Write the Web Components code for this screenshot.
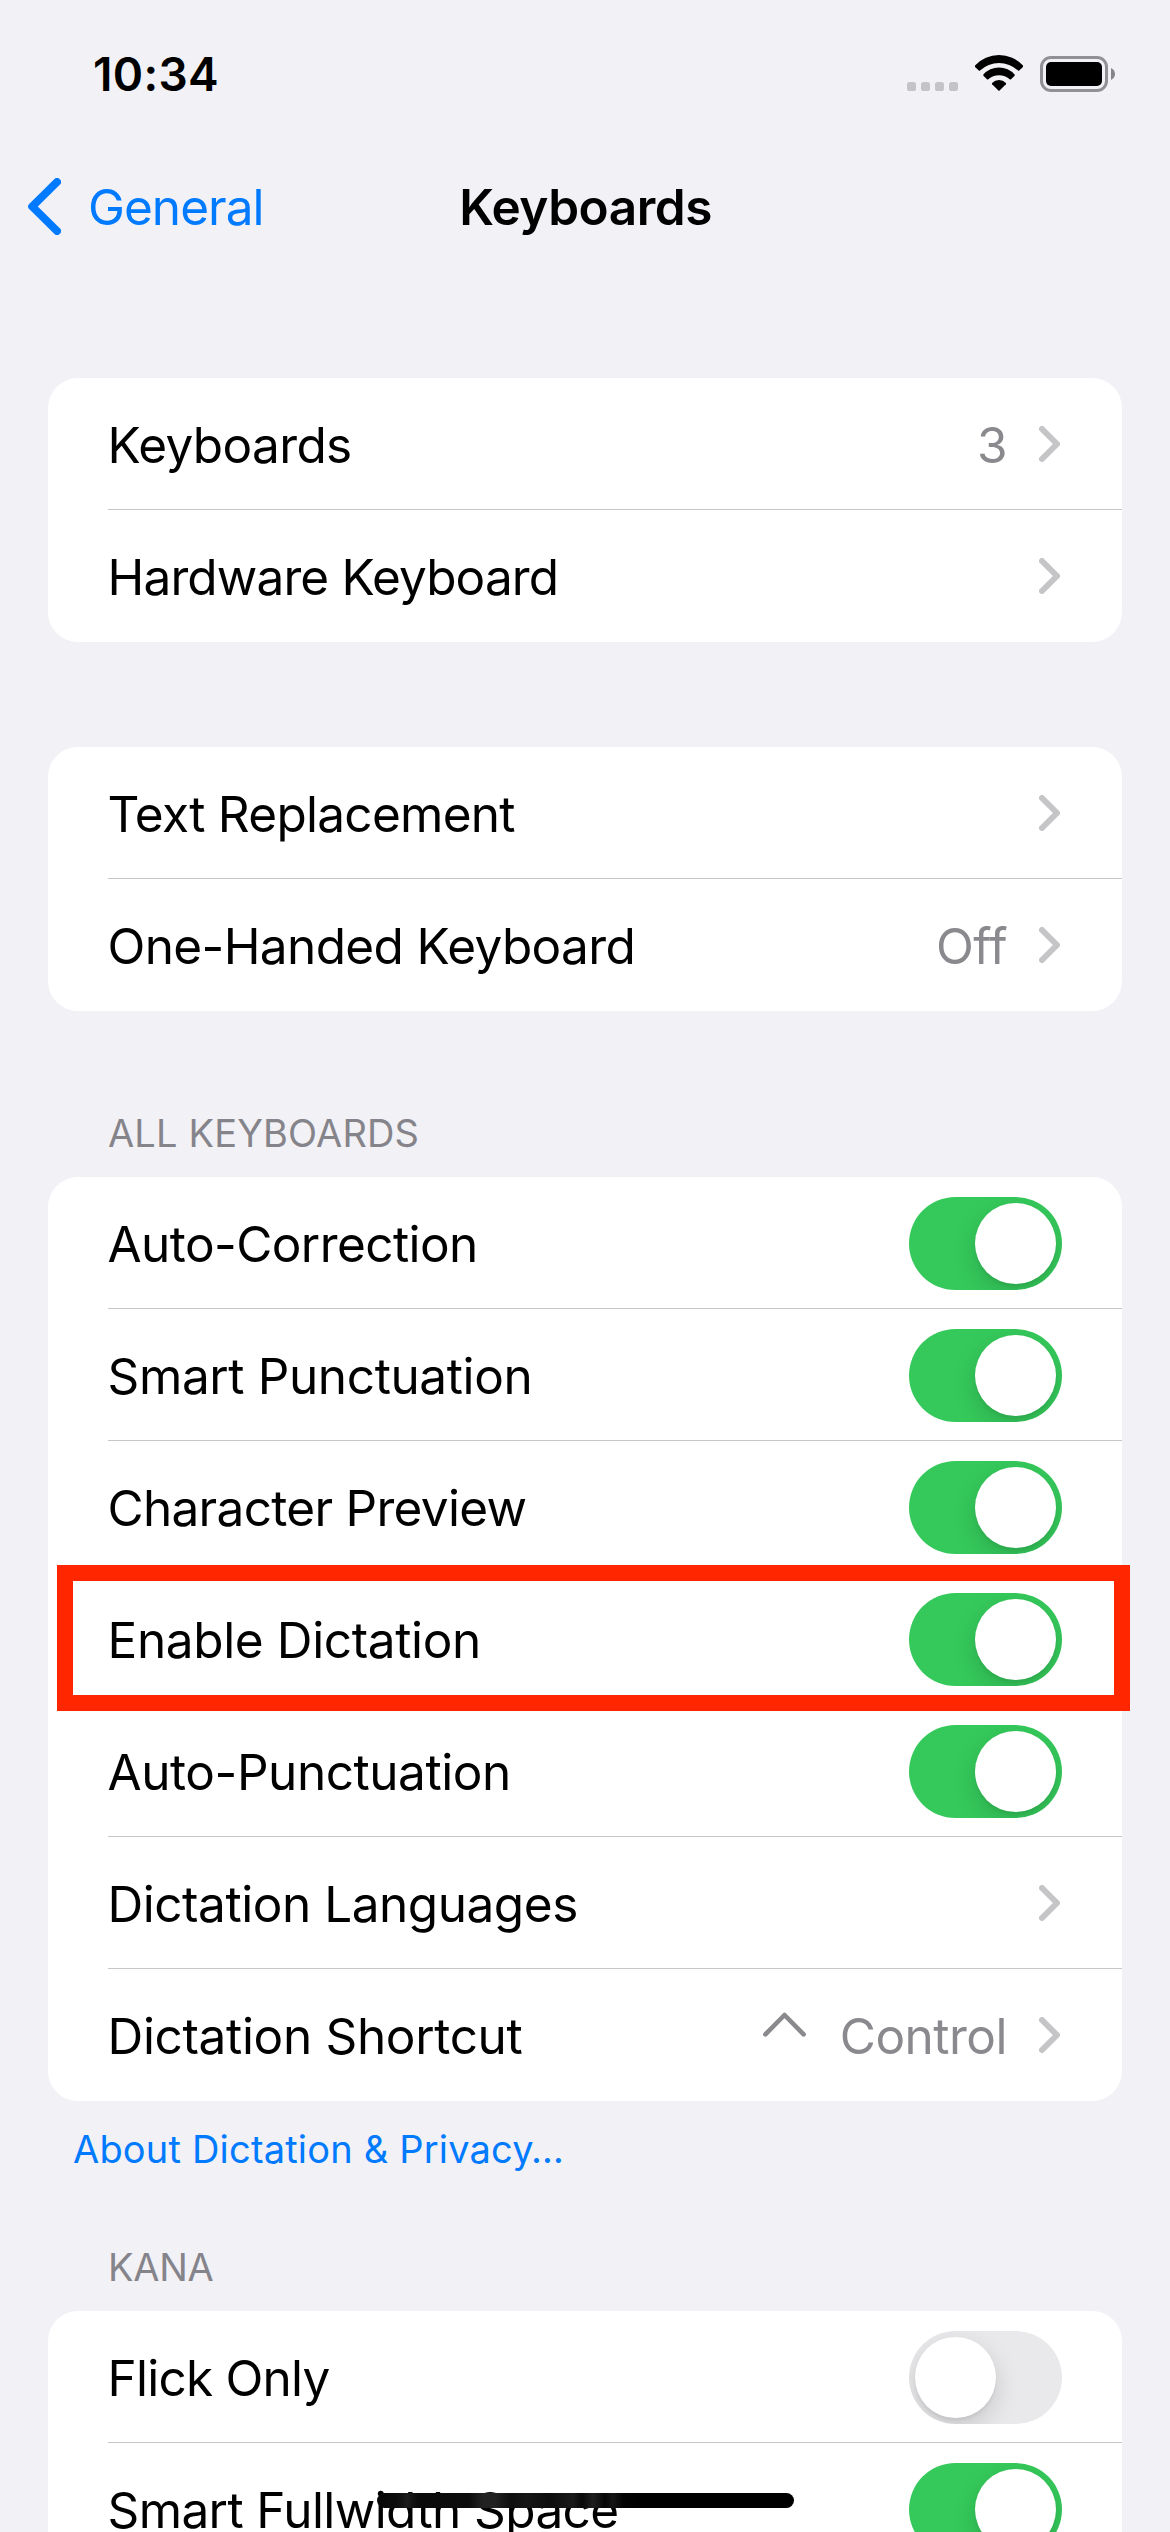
<!DOCTYPE html>
<html lang="en">
<head>
<meta charset="utf-8">
<title>Keyboards</title>
<style>
  html, body { margin: 0; padding: 0; }
  body {
    width: 1170px; height: 2532px; overflow: hidden;
    background: #f2f1f6; color: #000;
    font-family: Inter, "Liberation Sans", sans-serif;
    font-size: 49.5px; line-height: 60px;
  }
</style>
</head>
<body>
<settings-screen>
  <status-bar slot="bar" time="10:34"></status-bar>
  <nav-bar slot="bar" back="General">Keyboards</nav-bar>

  <settings-group>
    <settings-row tracking="-0.63" value="3" chevron>Keyboards</settings-row>
    <settings-row tracking="-0.85" chevron>Hardware Keyboard</settings-row>
  </settings-group>

  <settings-group>
    <settings-row tracking="-0.72" chevron>Text Replacement</settings-row>
    <settings-row tracking="-0.63" value="Off" chevron>One-Handed Keyboard</settings-row>
  </settings-group>

  <settings-group heading="ALL KEYBOARDS" heading-tracking="0.15">
    <settings-row tracking="-0.58">Auto-Correction<toggle-switch slot="control" on></toggle-switch></settings-row>
    <settings-row tracking="-0.37">Smart Punctuation<toggle-switch slot="control" on></toggle-switch></settings-row>
    <settings-row tracking="-0.7">Character Preview<toggle-switch slot="control" on></toggle-switch></settings-row>
    <settings-row tracking="-0.36" highlighted>Enable Dictation<toggle-switch slot="control" on></toggle-switch></settings-row>
    <settings-row tracking="-0.44">Auto-Punctuation<toggle-switch slot="control" on></toggle-switch></settings-row>
    <settings-row tracking="-0.46" chevron>Dictation Languages</settings-row>
    <settings-row tracking="-0.33" value="Control" caret chevron>Dictation Shortcut</settings-row>
    <span slot="footer">About Dictation &amp; Privacy…</span>
  </settings-group>

  <settings-group heading="KANA" heading-tracking="-0.3" after-footer>
    <settings-row tracking="-0.77">Flick Only<toggle-switch slot="control"></toggle-switch></settings-row>
    <settings-row tracking="-0.6">Smart Fullwidth Space<toggle-switch slot="control" on></toggle-switch></settings-row>
  </settings-group>

  <home-indicator slot="overlay"></home-indicator>
</settings-screen>

<script>
  class BaseElement extends HTMLElement {
    connectedCallback() {
      if (!this.shadowRoot) this.attachShadow({ mode: 'open' }).innerHTML = this.render();
    }
    attr(name, fallback = '') { return this.getAttribute(name) ?? fallback; }
  }

  customElements.define('settings-screen', class extends BaseElement {
    render() {
      return `<style>
        :host { display: block; position: relative; width: 1170px; height: 2532px; overflow: hidden; }
        main { display: flex; flex-direction: column; padding: 6px 48px 0; }
      </style>
      <header><slot name="bar"></slot></header>
      <main><slot></slot></main>
      <slot name="overlay"></slot>`;
    }
  });

  customElements.define('status-bar', class extends BaseElement {
    render() {
      return `<style>
        :host { display: flex; align-items: center; justify-content: space-between;
          height: 147px; box-sizing: border-box; padding: 0 55px 0 93px; }
        time { font-size: 46px; font-weight: 600; letter-spacing: .32px; padding-top: 1px; }
        .icons { display: flex; gap: 17px; }
        svg { display: block; }
      </style>
      <time>${this.attr('time')}</time>
      <div class="icons">
        <svg width="51" height="37" fill="#c4c3c8">
          <rect x="0" y="27" width="9" height="9" rx="2.6"/><rect x="14" y="27" width="9" height="9" rx="2.6"/>
          <rect x="28" y="27" width="9" height="9" rx="2.6"/><rect x="42" y="27" width="9" height="9" rx="2.6"/>
        </svg>
        <svg width="48" height="37">
          <path d="M0 10.6A32.7 32.7 0 0 1 48 10.6Q48.5 11.3 48 11.9L44.2 15.6Q43.6 16 43 15.5A27.8 27.8 0 0 0 5 15.5Q4.4 16 3.8 15.6L0 11.9Q-.5 11.3 0 10.6Z"/>
          <path d="M8.4 19.6A20.6 20.6 0 0 1 39.6 19.6Q40 20.2 39.6 20.7L35.8 24.4Q35.3 24.8 34.7 24.3A15.9 15.9 0 0 0 13.3 24.3Q12.7 24.8 12.2 24.4L8.4 20.7Q8 20.2 8.4 19.6Z"/>
          <path d="M17.1 28A9.6 9.6 0 0 1 30.9 28Q31.4 28.6 30.9 29.2L24.6 35.6Q24 36.1 23.4 35.6L17.1 29.2Q16.6 28.6 17.1 28Z"/>
        </svg>
        <svg width="75" height="37">
          <rect x="1.5" y="2.5" width="65" height="33" rx="9.5" fill="none" stroke="#919095" stroke-width="3"/>
          <rect x="6" y="7" width="56" height="24" rx="5"/>
          <path d="M71 13Q75 15.2 75 19T71 25Z" fill="#858489"/>
        </svg>
      </div>`;
    }
  });

  customElements.define('nav-bar', class extends BaseElement {
    render() {
      return `<style>
        :host { display: grid; grid-template-columns: 1fr auto 1fr; align-items: center;
          height: 120px; box-sizing: border-box; padding: 0 28px; }
        .back { display: flex; align-items: center; gap: 27px; color: #007aff; letter-spacing: -.97px; }
        .title { font-weight: 600; letter-spacing: -.48px; padding-left: 1px; }
        svg { display: block; margin-bottom: 1px; }
      </style>
      <div class="back">
        <svg width="33" height="57" fill="none" stroke="currentColor" stroke-width="8" stroke-linecap="round" stroke-linejoin="round">
          <path d="M29 4L4.2 28.5L29 53"/>
        </svg>
        <span>${this.attr('back')}</span>
      </div>
      <div class="title"><slot></slot></div>`;
    }
  });

  customElements.define('settings-group', class extends BaseElement {
    render() {
      const heading = this.attr('heading');
      return `<style>
        :host { display: block; padding-top: 105px; }
        :host([heading]) { padding-top: 97px; }
        :host([after-footer]) { padding-top: 68px; }
        h2 { margin: 0; padding: 0 60px 19px; font-size: 38px; line-height: 50px; font-weight: 400;
          color: #85848a; letter-spacing: ${this.attr('heading-tracking', '0')}px; }
        .card { background: #fff; border-radius: 30px; }
        .footer ::slotted(span) { display: block; padding: 23px 25px 0; font-size: 38px; line-height: 50px;
          color: #007aff; letter-spacing: .19px; }
      </style>
      ${heading ? `<h2>${heading}</h2>` : ''}
      <div class="card"><slot></slot></div>
      <div class="footer"><slot name="footer"></slot></div>`;
    }
  });

  customElements.define('settings-row', class extends BaseElement {
    render() {
      const value = this.attr('value');
      return `<style>
        :host { display: block; position: relative; padding-left: 60px; }
        .body { display: flex; align-items: center; height: 132px; box-sizing: border-box;
          padding-right: 60px; box-shadow: inset 0 -1px #c6c6c8; }
        :host(:last-of-type) .body { box-shadow: none; }
        .label { flex: 1; margin-left: -.5px; padding-top: 2px; letter-spacing: ${this.attr('tracking', '0')}px; white-space: nowrap; }
        .value { color: #8a8a8e; padding-top: 2px; letter-spacing: -.5px; margin-right: 32px; }
        .caret { margin: 0 34px 21px 0; }
        .chevron { margin-right: 2px; }
        svg { display: block; fill: none; stroke-linecap: round; stroke-linejoin: round; }
        .mark { position: absolute; inset: -8px -8px -6px 9px; border: 16px solid #ff2600; z-index: 1; }
      </style>
      <div class="body">
        <span class="label"><slot></slot></span>
        ${this.hasAttribute('caret') ? `<svg class="caret" width="43" height="25" stroke="#8a8a8e" stroke-width="4.6"><path d="M2.4 22.4L21.5 3L40.6 22.4"/></svg>` : ''}
        ${value ? `<span class="value">${value}</span>` : ''}
        ${this.hasAttribute('chevron') ? `<svg class="chevron" width="21" height="36" stroke="#c5c5c7" stroke-width="6"><path d="M3 3L18 18L3 33"/></svg>` : ''}
        <slot name="control"></slot>
      </div>
      ${this.hasAttribute('highlighted') ? '<div class="mark"></div>' : ''}`;
    }
  });

  customElements.define('toggle-switch', class extends BaseElement {
    render() {
      return `<style>
        :host { display: flex; box-sizing: border-box; width: 153px; height: 93px; margin-top: 1px;
          padding: 6px; border-radius: 46.5px; background: #e9e9eb; overflow: hidden; }
        :host([on]) { justify-content: flex-end; background: #35c95b; }
        i { width: 81px; height: 81px; border-radius: 50%; background: #fff;
          box-shadow: 0 9px 24px rgba(0,0,0,.15), 0 3px 3px rgba(0,0,0,.05); }
      </style><i></i>`;
    }
  });

  customElements.define('home-indicator', class extends BaseElement {
    render() {
      return `<style>
        :host { display: block; position: absolute; left: 377px; top: 2493px; width: 417px; height: 15px;
          border-radius: 7.5px; z-index: 2;
          background: linear-gradient(90deg, #060606 0, #0c0c0c 20px, #1c1c1c 30px, #0a0a0a 42px, #0c0c0c 92px,
            #222 106px, #222 118px, #0e0e0e 134px, #161616 150px, #0c0c0c 172px, #1a1a1a 196px, #080808 205px,
            #1e1e1e 216px, #060606 228px, #161616 236px, #030303 246px, #000 262px); }
      </style>`;
    }
  });
</script>
</body>
</html>
